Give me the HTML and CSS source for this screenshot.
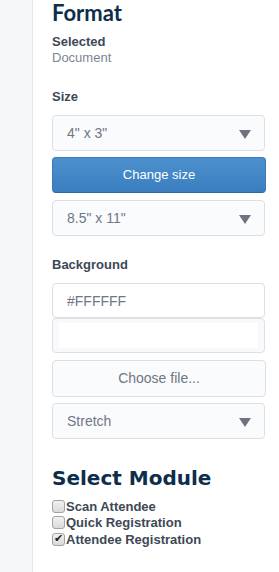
FILE: index.html
```html
<!DOCTYPE html>
<html>
<head>
    <meta charset="UTF-8">
    <title>Format</title>
    <link rel="stylesheet" href="styles.css">
</head>
<body>
<div class="page">
    <div class="side"></div>
    <div class="panel">
        <h2 class="title">Format</h2>

        <div class="selected">
            <b>Selected</b>
            <span>Document</span>
        </div>

        <label class="label">Size</label>
        <div class="field select">4" x 3"<i class="arrow"></i></div>
        <a href="javascript:;" class="btn">Change size</a>
        <div class="field select">8.5" x 11"<i class="arrow"></i></div>

        <label class="label bg-label">Background</label>
        <div class="field joined-top">#FFFFFF</div>
        <div class="field joined-bottom"><span class="inner"></span></div>
        <div class="field file">Choose file...</div>
        <div class="field select">Stretch<i class="arrow"></i></div>

        <h3 class="module">Select Module</h3>
        <ul class="checks">
            <li><input type="checkbox"/>Scan Attendee</li>
            <li><input type="checkbox"/>Quick Registration</li>
            <li><input type="checkbox" checked/>Attendee Registration</li>
        </ul>
    </div>
</div>
</body>
</html>
```

FILE: styles.css
```css
html, body {
    margin: 0;
    padding: 0;
    width: 100%;
    height: 100%;
    background: #fff;
    font-family: "Liberation Sans", Arial, sans-serif;
}

.page {
    display: flex;
    height: 100%;
}

.side {
    width: 32px;
    flex: none;
    background: #f6f7f9;
    border-right: 1px solid #e3e6ea;
}

.panel {
    flex: 1;
    padding: 0 14px 0 19px;
}

.title {
    margin: 0;
    padding-top: 1px;
    font-family: Lato, sans-serif;
    font-size: 22px;
    font-weight: 700;
    line-height: 24px;
    color: #0d2d4c;
}

.selected {
    margin-top: 9px;
    font-size: 13px;
    line-height: 16px;
}

.selected b {
    display: block;
    color: #3e4856;
}

.selected span {
    display: block;
    color: #7b8694;
}

.label {
    display: block;
    margin: 23px 0 10px;
    font-size: 13px;
    font-weight: 700;
    line-height: 16px;
    color: #3e4856;
}

.bg-label {
    margin-top: 21px;
}

.field {
    position: relative;
    box-sizing: border-box;
    height: 36px;
    line-height: 34px;
    padding: 0 14px;
    border: 1px solid #dcdfe4;
    border-radius: 4px;
    background: #fafbfc;
    font-size: 14px;
    color: #6f7784;
    margin-bottom: 6px;
}

.arrow {
    position: absolute;
    right: 13px;
    top: 14px;
    width: 0;
    height: 0;
    border-left: 6px solid transparent;
    border-right: 6px solid transparent;
    border-top: 9px solid #6c7480;
}

.btn {
    display: block;
    height: 36px;
    margin-bottom: 7px;
    margin-right: -1px;
    border-radius: 4px;
    background: linear-gradient(#4c90cd, #3b7ec0);
    border: 1px solid #3a7ab6;
    border-bottom-color: #2f6aa3;
    box-sizing: border-box;
    text-align: center;
    line-height: 34px;
    font-size: 13px;
    color: #fff;
    text-decoration: none;
}

.joined-top {
    height: 35px;
    margin-bottom: 0;
    background: #fff;
}

.joined-bottom {
    height: 35px;
    padding: 4px 6px;
    margin-bottom: 7px;
    background: #f8f9fc;
}

.joined-bottom .inner {
    display: block;
    height: 25px;
    background: #fff;
}

.file {
    height: 37px;
    text-align: center;
    line-height: 35px;
    margin-right: -1px;
}

.module {
    margin: 27px 0 8px;
    font-family: "DejaVu Sans", Verdana, sans-serif;
    font-size: 20px;
    font-weight: 700;
    line-height: 24px;
    color: #0d2d4c;
}

.checks {
    list-style: none;
    margin: 0;
    padding: 0;
}

.checks li {
    display: flex;
    align-items: center;
    height: 16.5px;
    font-size: 13px;
    font-weight: 700;
    color: #3e4856;
}

.checks input {
    -webkit-appearance: none;
    appearance: none;
    position: relative;
    box-sizing: border-box;
    margin: 0 1px 0 0;
    width: 13px;
    height: 13px;
    border: 1px solid #a3a3a3;
    border-radius: 3px;
    background: linear-gradient(#f2f2f2, #d9d9d9);
}

.checks input:checked::after {
    content: "\2714";
    position: absolute;
    left: 1px;
    top: -2px;
    font-family: "DejaVu Sans", sans-serif;
    font-size: 11px;
    line-height: 14px;
    color: #222;
}
```
